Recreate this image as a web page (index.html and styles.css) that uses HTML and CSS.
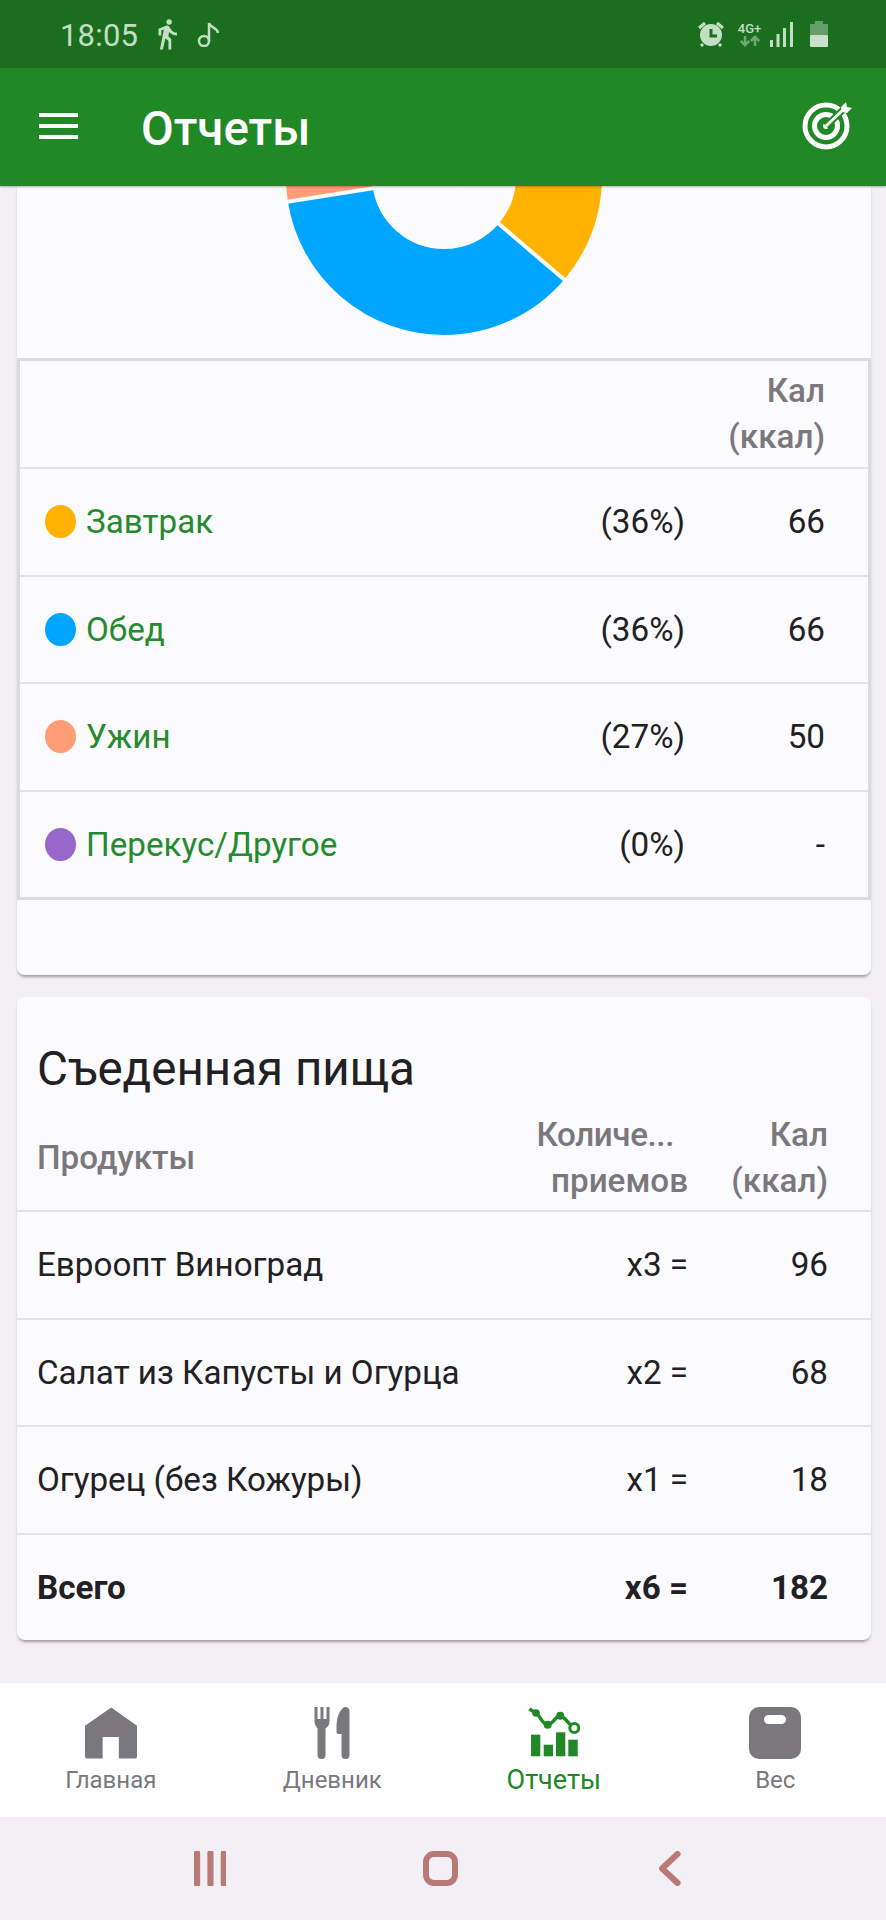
FILE: index.html
```html
<!DOCTYPE html>
<html lang="ru">
<head>
  <meta charset="UTF-8" />
  <meta name="viewport" content="width=device-width, initial-scale=1.0"/>
  <title>Отчеты</title>
  <link rel="stylesheet" href="styles.css">
</head>
<body>

  <div class="status-bar">
    <div class="status-left">
      <span class="status-time">18:05</span>
      <svg class="icon-walk" viewBox="0 0 24 24"><path d="M13.5 5.5c1.1 0 2-.9 2-2s-.9-2-2-2-2 .9-2 2 .9 2 2 2zM9.8 8.9L7 23h2.1l1.8-8 2.1 2v6h2v-7.5l-2.1-2 .6-3C14.8 12 16.8 13 19 13v-2c-1.9 0-3.5-1-4.3-2.4l-1-1.6c-.4-.6-1-1-1.7-1-.3 0-.5.1-.8.1L6 8.3V13h2V9.6l1.8-.7"/></svg>
      <svg class="icon-note" viewBox="0 0 24 26"><circle cx="7" cy="20" r="5"/><path d="M12 20V2c1 5 8 4 9 10"/></svg>
    </div>
    <div class="status-right">
      <svg class="icon-alarm" viewBox="0 0 28 26">
        <circle class="alarm-face" cx="14" cy="14" r="11"/>
        <path class="alarm-hands" d="M14 8v7h6"/>
        <path class="alarm-ears" d="M2 7l6-5M26 7l-6-5M6 23l-2 2M22 23l2 2"/>
      </svg>
      <div class="net">
        <span class="net-label">4G+</span>
        <svg class="net-arrows" viewBox="0 0 24 12"><path d="M6 0v10M1 6l5 5 5-5"/><path d="M18 12V2M13 6l5-5 5 5"/></svg>
      </div>
      <svg class="icon-signal" viewBox="0 0 23 25"><rect x="0" y="18" width="3" height="7"/><rect x="6.500" y="12" width="3" height="13"/><rect x="13" y="6" width="3" height="19"/><rect x="20" y="0" width="3" height="25"/></svg>
      <svg class="icon-battery" viewBox="0 0 18 26"><path class="battery-empty" d="M5 0h8v3h5v11H0V3h5z"/><rect class="battery-full" x="0" y="14" width="18" height="12" rx="1"/></svg>
    </div>
  </div>

  <div class="app-bar">
    <div class="menu-icon"><span></span><span></span><span></span></div>
    <div class="app-title">Отчеты</div>
    <svg class="icon-target" viewBox="0 0 52 52">
      <circle class="ring" cx="24" cy="26" r="21"/>
      <circle class="ring" cx="24" cy="26" r="11.500"/>
      <circle class="bull" cx="24" cy="26" r="3"/>
      <path class="arrow-gap" d="M24 26L42 9"/>
      <path class="arrow" d="M24 26L43 8"/>
      <path class="bull" d="M39 7l5-5 1 5 5 1-5 5-5-1z"/>
    </svg>
  </div>

  <div class="content">
    <div class="card card-top">
      <div class="chart">
        <svg class="donut" viewBox="0 0 340 173">
          <g transform="rotate(-90 170 -9)">
            <circle class="slice slice-orange" cx="170" cy="-9" r="115" pathLength="100" stroke-dasharray="27.47 72.53" stroke-dashoffset="-72.53"/>
            <circle class="slice slice-blue" cx="170" cy="-9" r="115" pathLength="100" stroke-dasharray="36.26 63.74" stroke-dashoffset="-36.26"/>
            <circle class="slice slice-yellow" cx="170" cy="-9" r="115" pathLength="100" stroke-dasharray="36.26 63.74"/>
          </g>
          <path class="slice-gap" d="M170 -9L295.400 98.100M170 -9L7 16.800"/>
        </svg>
      </div>

      <div class="meal-table">
        <div class="row head-row">
          <span class="cell-name"></span>
          <span class="cell-cal cell-head">Кал<br>(ккал)</span>
        </div>
        <div class="row">
          <span class="cell-name meal-name"><i class="dot dot-yellow"></i>Завтрак</span>
          <span class="cell-pct">(36%)</span>
          <span class="cell-cal">66</span>
        </div>
        <div class="row">
          <span class="cell-name meal-name"><i class="dot dot-blue"></i>Обед</span>
          <span class="cell-pct">(36%)</span>
          <span class="cell-cal">66</span>
        </div>
        <div class="row">
          <span class="cell-name meal-name"><i class="dot dot-orange"></i>Ужин</span>
          <span class="cell-pct">(27%)</span>
          <span class="cell-cal">50</span>
        </div>
        <div class="row">
          <span class="cell-name meal-name"><i class="dot dot-purple"></i>Перекус/Другое</span>
          <span class="cell-pct">(0%)</span>
          <span class="cell-cal">-</span>
        </div>
      </div>
    </div>

    <div class="card card-food">
      <h2 class="food-title">Съеденная пища</h2>
      <div class="food-head">
        <span class="cell-name cell-head">Продукты</span>
        <span class="cell-qty cell-head"><span class="qty-cut">Количе...</span><br>приемов</span>
        <span class="cell-total cell-head">Кал<br>(ккал)</span>
      </div>
      <div class="row food-row">
        <span class="cell-name">Евроопт Виноград</span>
        <span class="cell-qty">x3 =</span>
        <span class="cell-total">96</span>
      </div>
      <div class="row food-row">
        <span class="cell-name">Салат из Капусты и Огурца</span>
        <span class="cell-qty">x2 =</span>
        <span class="cell-total">68</span>
      </div>
      <div class="row food-row">
        <span class="cell-name">Огурец (без Кожуры)</span>
        <span class="cell-qty">x1 =</span>
        <span class="cell-total">18</span>
      </div>
      <div class="row food-row food-sum">
        <span class="cell-name">Всего</span>
        <span class="cell-qty">x6 =</span>
        <span class="cell-total">182</span>
      </div>
    </div>
  </div>

  <div class="bottom-nav">
    <div class="nav-item">
      <svg class="nav-icon" viewBox="0 0 53 52"><path d="M26.700 0L53 18.500V50a2 2 0 0 1-2 2H34.500V30H18v22H2a2 2 0 0 1-2-2V18.500z"/></svg>
      <span>Главная</span>
    </div>
    <div class="nav-item">
      <svg class="nav-icon" viewBox="0 0 35 52">
        <path d="M0 0h3v12h3V0h3v12h3V0h3v14c0 4-2 6-4 7.500V48a4 4 0 0 1-8 0V21.500C2 20 0 18 0 14z"/>
        <path d="M22 20C22 8 27 0 31 0c2.500 0 4 2 4 4v44a4 4 0 0 1-8 0V27h-3c-1.500 0-2-1-2-2z"/>
      </svg>
      <span>Дневник</span>
    </div>
    <div class="nav-item nav-active">
      <svg class="nav-icon" viewBox="0 0 52 52">
        <rect x="3" y="27.700" width="9.300" height="21.600"/>
        <rect x="15.700" y="37.700" width="9.300" height="11.600"/>
        <rect x="28" y="25.300" width="9.300" height="24"/>
        <rect x="40.300" y="32.700" width="9.400" height="16.600"/>
        <path class="chart-line" d="M1.300 2L8 6c4 2 6 12 11.700 11.700S28 8 32.300 8.700 40 17 46.300 21"/>
        <circle cx="8" cy="6" r="3.800"/>
        <circle cx="19.700" cy="17.700" r="4"/>
        <circle cx="32.300" cy="8.700" r="4"/>
        <circle class="chart-ring" cx="46.300" cy="21" r="4.500"/>
      </svg>
      <span>Отчеты</span>
    </div>
    <div class="nav-item">
      <svg class="nav-icon" viewBox="0 0 52 52"><path fill-rule="evenodd" d="M10 0h32a10 10 0 0 1 10 10v32a10 10 0 0 1-10 10H10A10 10 0 0 1 0 42V10A10 10 0 0 1 10 0zM19.500 8a4.500 4.500 0 0 0 0 9h13a4.500 4.500 0 0 0 0-9z"/></svg>
      <span>Вес</span>
    </div>
  </div>

  <div class="system-nav">
    <div class="sys-btn">
      <svg class="sys-icon" viewBox="0 0 32 34"><path d="M3 2v30M16 2v30M29 2v30"/></svg>
    </div>
    <div class="sys-btn">
      <svg class="sys-icon" viewBox="0 0 35 35"><rect x="3" y="3" width="29" height="29" rx="8"/></svg>
    </div>
    <div class="sys-btn">
      <svg class="sys-icon" viewBox="0 0 21 34"><path d="M18 3L3 17l15 14"/></svg>
    </div>
  </div>

</body>
</html>
```

FILE: styles.css
```css
* {
  box-sizing: border-box;
}

body {
  margin: 0;
  width: 886px;
  height: 1920px;
  overflow: hidden;
  display: flex;
  flex-direction: column;
  font-family: Roboto, sans-serif;
  background-color: #f2f0f5;
  color: #212023;
}

/* status bar */
.status-bar {
  height: 68px;
  flex: none;
  display: flex;
  justify-content: space-between;
  align-items: center;
  padding: 0 58px 0 60px;
  background-color: #1c6e1f;
  color: #c3dfc3;
}

.status-left, .status-right {
  display: flex;
  align-items: center;
}

.status-time {
  font-size: 31px;
  letter-spacing: 0.2px;
  margin-top: 2px;
}

.icon-walk {
  width: 34px;
  height: 34px;
  margin-left: 12px;
  fill: #c3dfc3;
}

.icon-note {
  width: 24px;
  height: 26px;
  margin-left: 13px;
  fill: none;
  stroke: #c3dfc3;
  stroke-width: 2.5;
}

.icon-alarm {
  width: 28px;
  height: 26px;
}

.alarm-face { fill: #c3dfc3; }
.alarm-hands { fill: none; stroke: #1c6e1f; stroke-width: 3; }
.alarm-ears { fill: none; stroke: #c3dfc3; stroke-width: 3; }

.net {
  width: 27px;
  margin-left: 11px;
  display: flex;
  flex-direction: column;
  align-items: center;
}

.net-label {
  font-size: 13px;
  line-height: 13px;
  font-weight: 500;
}

.net-arrows {
  width: 20px;
  height: 12px;
  fill: none;
  stroke: #6fa872;
  stroke-width: 3;
}

.icon-signal {
  width: 23px;
  height: 25px;
  margin-left: 7px;
  fill: #c3dfc3;
}

.icon-battery {
  width: 18px;
  height: 26px;
  margin-left: 17px;
}

.battery-empty { fill: #659e68; }
.battery-full { fill: #c9e0ca; }

/* app bar */
.app-bar {
  height: 118px;
  flex: none;
  display: flex;
  align-items: center;
  padding: 0 32px 0 39px;
  background-color: #208825;
  color: white;
  position: relative;
  z-index: 2;
  box-shadow: 0 1px 2px rgba(0,0,0,0.3);
}

.menu-icon {
  width: 39px;
  display: flex;
  flex-direction: column;
  gap: 7px;
  margin-bottom: 2px;
}

.menu-icon span {
  height: 4px;
  background-color: white;
}

.app-title {
  margin: 4px 0 0 63px;
  flex: 1;
  font-size: 47.5px;
  font-weight: 500;
}

.icon-target {
  width: 52px;
  height: 52px;
  margin-bottom: 2px;
}

.ring { fill: none; stroke: white; stroke-width: 5; }
.bull { fill: white; }
.arrow-gap { fill: none; stroke: #208825; stroke-width: 7; }
.arrow { fill: none; stroke: white; stroke-width: 3; }

/* scrolling content */
.content {
  flex: 1;
  overflow: hidden;
  padding: 0 15px 0 17px;
  display: flex;
  flex-direction: column;
  gap: 22px;
}

.card {
  flex: none;
  background-color: #fbfafd;
  border-radius: 8px;
  box-shadow: 0 3px 3px -1px rgba(0,0,0,0.35);
}

.card-top {
  height: 789px;
  border-radius: 0 0 8px 8px;
}

.chart {
  height: 172px;
}

.donut {
  display: block;
  width: 340px;
  height: 173px;
  margin: 0 auto;
}

.slice {
  fill: none;
  stroke-width: 86;
}

.slice-yellow { stroke: #ffb300; }
.slice-blue { stroke: #00a5ff; }
.slice-orange { stroke: #ff9e76; }

.slice-gap {
  fill: none;
  stroke: #fbfafd;
  stroke-width: 4;
}

.meal-table {
  border: 3px solid #dcdbe0;
}

.row {
  height: 107.6px;
  display: flex;
  align-items: center;
  font-size: 33.2px;
  border-top: 2px solid #e2e1e5;
}

.meal-table .row {
  padding: 0 43px 0 25px;
}

.meal-table .head-row {
  height: 106px;
  border-top: none;
}

.cell-name {
  flex: 1;
  display: flex;
  align-items: center;
}

.cell-pct {
  text-align: right;
}

.cell-cal {
  width: 140px;
  text-align: right;
}

.cell-head {
  color: #7a787c;
  font-weight: 500;
  line-height: 46.5px;
}

.meal-name {
  color: #268a2e;
}

.dot {
  width: 31px;
  height: 33px;
  border-radius: 50%;
  margin-right: 10px;
}

.dot-yellow { background-color: #ffb300; }
.dot-blue { background-color: #00a5ff; }
.dot-orange { background-color: #ff9e76; }
.dot-purple { background-color: #9768c9; }

/* eaten food */
.card-food {
  height: 643px;
}

.food-title {
  margin: 0;
  padding: 44px 20px 0;
  height: 113px;
  font-size: 47.5px;
  line-height: 56px;
  font-weight: 400;
}

.food-head {
  height: 100px;
  display: flex;
  align-items: center;
  padding: 0 43px 4px 20px;
  font-size: 33.2px;
}

.food-row {
  padding: 0 43px 0 20px;
}

.cell-qty {
  text-align: right;
}

.qty-cut {
  margin-right: 14px;
  letter-spacing: -0.4px;
}

.cell-total {
  width: 140px;
  text-align: right;
}

.food-sum {
  font-weight: 700;
}

/* bottom navigation */
.bottom-nav {
  height: 134px;
  flex: none;
  display: grid;
  grid-template-columns: repeat(4, 1fr);
  padding-top: 24px;
  background-color: white;
  color: #7a787c;
}

.nav-item {
  display: flex;
  flex-direction: column;
  align-items: center;
  font-size: 24px;
  line-height: 30px;
}

.nav-item span {
  margin-top: 6px;
}

.nav-icon {
  width: 52px;
  height: 52px;
  fill: #7a787c;
}

.nav-active {
  color: #208825;
  font-size: 27px;
}

.nav-active .nav-icon {
  fill: #208825;
}

.chart-line {
  fill: none;
  stroke: #208825;
  stroke-width: 3.5;
}

.chart-ring {
  fill: white;
  stroke: #208825;
  stroke-width: 3;
}

/* android buttons */
.system-nav {
  height: 103px;
  flex: none;
  display: flex;
  justify-content: center;
  align-items: center;
  gap: 190px;
  padding-right: 6px;
  background-color: #f2f0f4;
}

.sys-btn {
  width: 40px;
  display: flex;
  justify-content: center;
}

.sys-icon {
  height: 35px;
  width: auto;
  fill: none;
  stroke: #b97a77;
  stroke-width: 6;
  stroke-linecap: round;
  stroke-linejoin: round;
}
```
